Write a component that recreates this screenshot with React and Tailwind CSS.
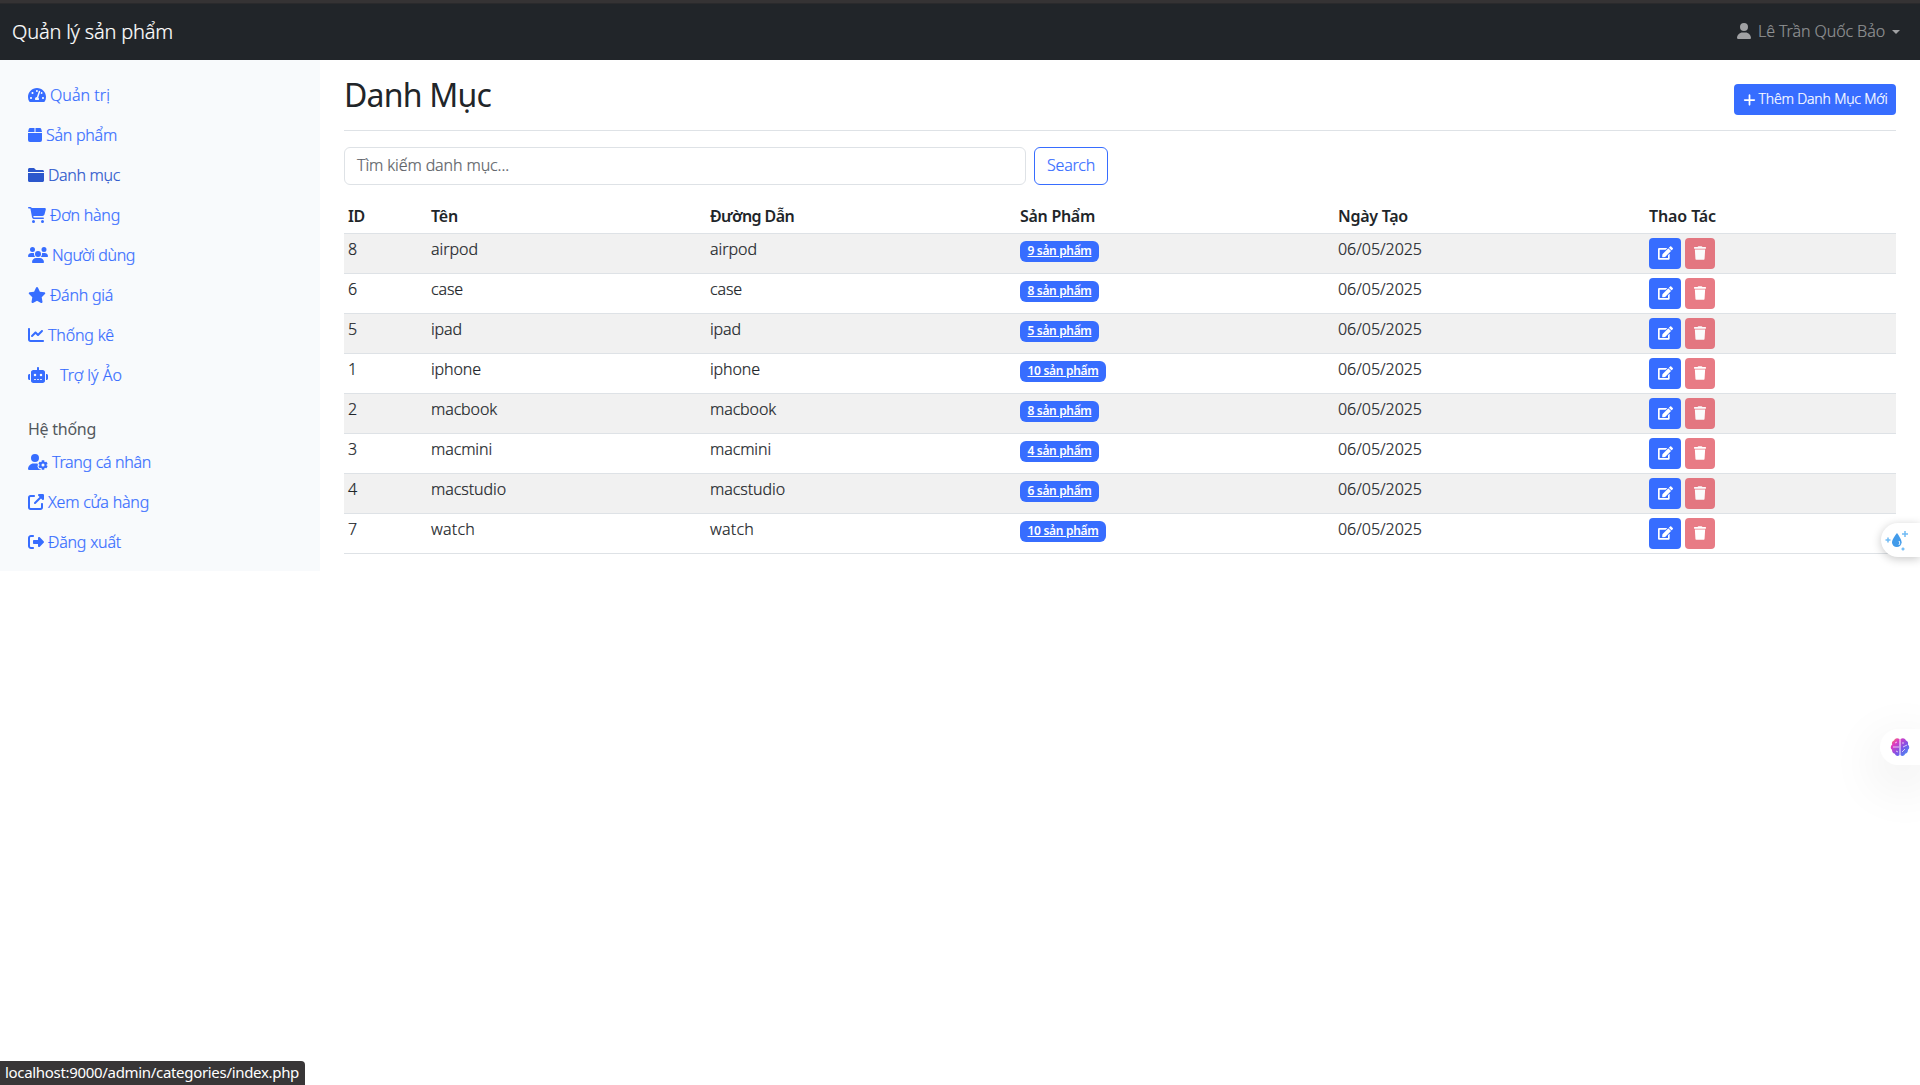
import { useLayoutEffect, useRef, useState } from "react";
import {
  FaCartShopping, FaUsers, FaStar, FaChartLine, FaRobot,
  FaUserGear, FaUpRightFromSquare, FaRightFromBracket, FaUser, FaPlus,
} from "react-icons/fa6";
import { FaTachometerAlt, FaEdit, FaTrash } from "react-icons/fa";

// Text tracked so that it spans `w` pixels.
function T({ w, children, className = "" }) {
  const ref = useRef(null);
  const [ls, setLs] = useState(0);
  useLayoutEffect(() => {
    const n = ref.current.getBoundingClientRect().width;
    setLs((w - n) / String(children).length);
  }, []);
  return (
    <span ref={ref} className={`inline-block whitespace-nowrap ${className}`} style={{ letterSpacing: `${ls}px` }}>
      {children}
    </span>
  );
}

function Box({ className }) {
  return (
    <svg viewBox="0 0 14 14" fill="currentColor" className={className}>
      <path d="M2.500 0H6.500V4H0L.7 1.300C.9.500 1.600 0 2.500 0ZM7.500 0H11.500c.9 0 1.600.5 1.800 1.300L14 4H7.500ZM0 5H14V12a2 2 0 0 1-2 2H2a2 2 0 0 1-2-2Z" />
    </svg>
  );
}

function Folder({ className }) {
  return (
    <svg viewBox="0 0 16 14" fill="currentColor" className={className}>
      <path d="M1.500 0H5.500c.4 0 .8.2 1 .4L8 2H14.500c.8 0 1.500.7 1.500 1.500V4H0V1.500C0 .7.7 0 1.500 0ZM0 5H16V12.500c0 .8-.7 1.500-1.500 1.500h-13C.7 14 0 13.300 0 12.500Z" />
    </svg>
  );
}

const nav = [
  [FaTachometerAlt, "h-4 w-[18px]", "Quản trị", 60],
  [Box, "h-[14px] w-[14px]", "Sản phẩm", 71],
  [Folder, "h-[14px] w-[16px]", "Danh mục", 72],
  [FaCartShopping, "h-4 w-[18px]", "Đơn hàng", 70],
  [FaUsers, "h-4 w-[20px]", "Người dùng", 83],
  [FaStar, "h-4 w-[18px]", "Đánh giá", 63],
  [FaChartLine, "h-4 w-[16px]", "Thống kê", 66],
  [FaRobot, "h-4 w-[20px] mr-2", "Trợ lý Ảo", 62],
];
const system = [
  [FaUserGear, "h-4 w-[20px]", "Trang cá nhân", 99],
  [FaUpRightFromSquare, "h-4 w-[16px]", "Xem cửa hàng", 101],
  [FaRightFromBracket, "h-4 w-[16px]", "Đăng xuất", 73],
];
const rows = [
  [8, "airpod", 47, 9],
  [6, "case", 32, 8],
  [5, "ipad", 31, 5],
  [1, "iphone", 50, 10],
  [2, "macbook", 66, 8],
  [3, "macmini", 61, 4],
  [4, "macstudio", 75, 6],
  [7, "watch", 44, 10],
];
const cols = "grid grid-cols-[83px_279px_310px_318px_311px_247px]";

function NavItem({ item: [Icon, size, label, w] }) {
  const active = label === "Danh mục";
  return (
    <a className={`flex h-10 items-center gap-1 px-7 ${active ? "text-[#2b57cc]" : "text-[#376dff]"}`}>
      <Icon className={`shrink-0 ${size}`} />
      <T w={w}>{label}</T>
    </a>
  );
}

export default function App() {
  return (
    <div className="relative h-[1085px] w-[1920px] overflow-hidden bg-white font-['Noto_Sans','Open_Sans',sans-serif] text-base font-light text-[#212529] [-webkit-text-stroke:0.2px]">
      <div className="h-1 border-b border-[#2a2a2c] bg-[#353334]" />
      <header className="flex h-14 items-center justify-between bg-[#212529] pr-5 pl-3">
        <T w={161} className="text-xl text-white">Quản lý sản phẩm</T>
        <div className="flex items-center text-[#909294]">
          <FaUser className="mr-[7px] mb-[2px] h-4 w-[14px] text-[#a0a1a3]" />
          <T w={127} className="-translate-y-px">Lê Trần Quốc Bảo</T>
          <span className="mb-px ml-[7px] border-x-4 border-t-4 border-x-transparent border-t-[#a0a1a3]" />
        </div>
      </header>
      <div className="flex items-start">
        <nav className="h-[511px] w-80 shrink-0 bg-[#f8fafc] pt-[15px]">
          {nav.map((n) => <NavItem key={n[2]} item={n} />)}
          <h6 className="mt-[25px] mb-[3px] px-7 leading-[19px] font-normal text-[#53585c] [-webkit-text-stroke:0]"><T w={68}>Hệ thống</T></h6>
          {system.map((n) => <NavItem key={n[2]} item={n} />)}
        </nav>
        <main className="min-w-0 flex-1 px-6 pt-4">
          <div className="flex h-[55px] items-start justify-between border-b border-[#dee2e6]">
            <h1 className="text-[32px] leading-[38px] font-normal [-webkit-text-stroke:0]"><T w={147}>Danh Mục</T></h1>
            <button className="mt-2 flex h-[31px] w-[162px] items-center justify-center gap-[3px] rounded bg-[#376dff] text-sm text-white">
              <FaPlus className="h-[14px] w-[13px]" />
              <T w={129} className="-translate-y-px">Thêm Danh Mục Mới</T>
            </button>
          </div>
          <div className="mt-4 flex gap-2">
            <div className="flex h-[38px] w-[682px] items-center rounded-md border border-[#dee2e6] px-3 text-[#5d6268]">
              <T w={152} className="-translate-y-px">Tìm kiếm danh mục...</T>
            </div>
            <button className="flex h-[38px] w-[74px] items-center justify-center rounded-md border border-[#376dff] text-[#376dff]">
              <T w={48} className="-translate-y-px">Search</T>
            </button>
          </div>
          <div className="mt-4">
            <div className={`${cols} h-[33px] border-b border-[#dee2e6] pt-[3px] pl-1 font-semibold [-webkit-text-stroke:0]`}>
              <span><T w={17}>ID</T></span>
              <span><T w={27}>Tên</T></span>
              <span><T w={84}>Đường Dẫn</T></span>
              <span><T w={75}>Sản Phẩm</T></span>
              <span><T w={70}>Ngày Tạo</T></span>
              <span><T w={67}>Thao Tác</T></span>
            </div>
            {rows.map(([id, name, w, count]) => (
              <div key={id} className={`${cols} h-10 border-b border-[#dee2e6] pt-[3px] pl-1 odd:bg-white even:bg-[#f1f1f1]`}>
                <span>{id}</span>
                <span><T w={w}>{name}</T></span>
                <span><T w={w}>{name}</T></span>
                <span className="pt-1">
                  <span className={`flex h-[21px] items-center justify-center rounded-md bg-[#376dff] text-xs font-semibold text-white [-webkit-text-stroke:0] ${count === 10 ? "w-[86px]" : "w-[79px]"}`}>
                    <T w={count === 10 ? 71 : 64} className="-translate-y-px underline">{`${count} sản phẩm`}</T>
                  </span>
                </span>
                <span><T w={84}>06/05/2025</T></span>
                <span className="flex gap-1 pt-px">
                  <button className="flex h-[31px] w-8 items-center justify-center rounded bg-[#376dff] pb-px text-white"><FaEdit className="h-[14px] w-[15px]" /></button>
                  <button className="flex h-[31px] w-[30px] items-center justify-center rounded bg-[#dc3545] pb-px text-white opacity-65"><FaTrash className="h-[14px] w-[12px]" /></button>
                </span>
              </div>
            ))}
          </div>
        </main>
      </div>

      <div className="absolute top-[523px] right-0 flex h-[34px] w-[39px] items-center rounded-l-full bg-white pl-1 shadow-[0_2px_10px_rgba(0,0,0,0.22)]">
        <svg viewBox="0 0 24 22" className="h-[22px] w-6">
          <path d="M12 4C12 4 7 10 7 13.300a4.800 4.800 0 0 0 9.600 0C16.600 10 12 4 12 4Z" fill="#429bea" />
          <path d="M14 12c1 1.500 1 3-.3 4" stroke="#fff" strokeWidth="1" fill="none" />
          <path d="M20 2v6M17 5h6M3 8.500v5M.5 11h5M18 18.500v3M16.500 20h3" stroke="#70bbf5" strokeWidth="1.500" />
        </svg>
      </div>
      <div className="absolute top-[729px] right-0 flex h-9 w-10 items-center rounded-l-full bg-white pl-[10px] shadow-[0_16px_48px_12px_rgba(0,0,0,0.05)]">
        <svg viewBox="0 0 20 20" className="size-5">
          <defs>
            <linearGradient id="brain" x1="0" y1="0" x2="1" y2="1">
              <stop offset="0" stopColor="#f6a23c" /><stop offset=".25" stopColor="#e23bc0" />
              <stop offset=".6" stopColor="#7a55e8" /><stop offset="1" stopColor="#3f9df5" />
            </linearGradient>
          </defs>
          <path d="M9.500 2C7 .3 4.500 1.500 4 3.500 2 4 1.500 6 2.200 7.500.3 9 .3 11.500 2 12.800 2 15 3 16.500 4.800 16.800 6 19.500 8.500 19.300 9.500 18ZM10.500 2c2.500-1.700 5-.5 5.500 1.500 2 .5 2.500 2.500 1.800 4 1.900 1.500 1.900 4 .2 5.300 0 2.200-1 3.700-2.800 4-1.200 2.700-3.700 2.500-4.700 1.200Z" fill="url(#brain)" />
          <path d="M3 10h6M5 6l2-1M6 14l2 1M12 6h2M13 10l4-2M12 15l3-3" stroke="#fff" strokeOpacity=".7" strokeWidth="1" fill="none" />
        </svg>
      </div>
      <div className="absolute bottom-0 left-0 flex h-6 w-[305px] items-center rounded-tr bg-[#383637] pb-[2px] pl-[5px] text-[15px] font-normal text-white [-webkit-text-stroke:0]">
        <T w={294}>localhost:9000/admin/categories/index.php</T>
      </div>
    </div>
  );
}
